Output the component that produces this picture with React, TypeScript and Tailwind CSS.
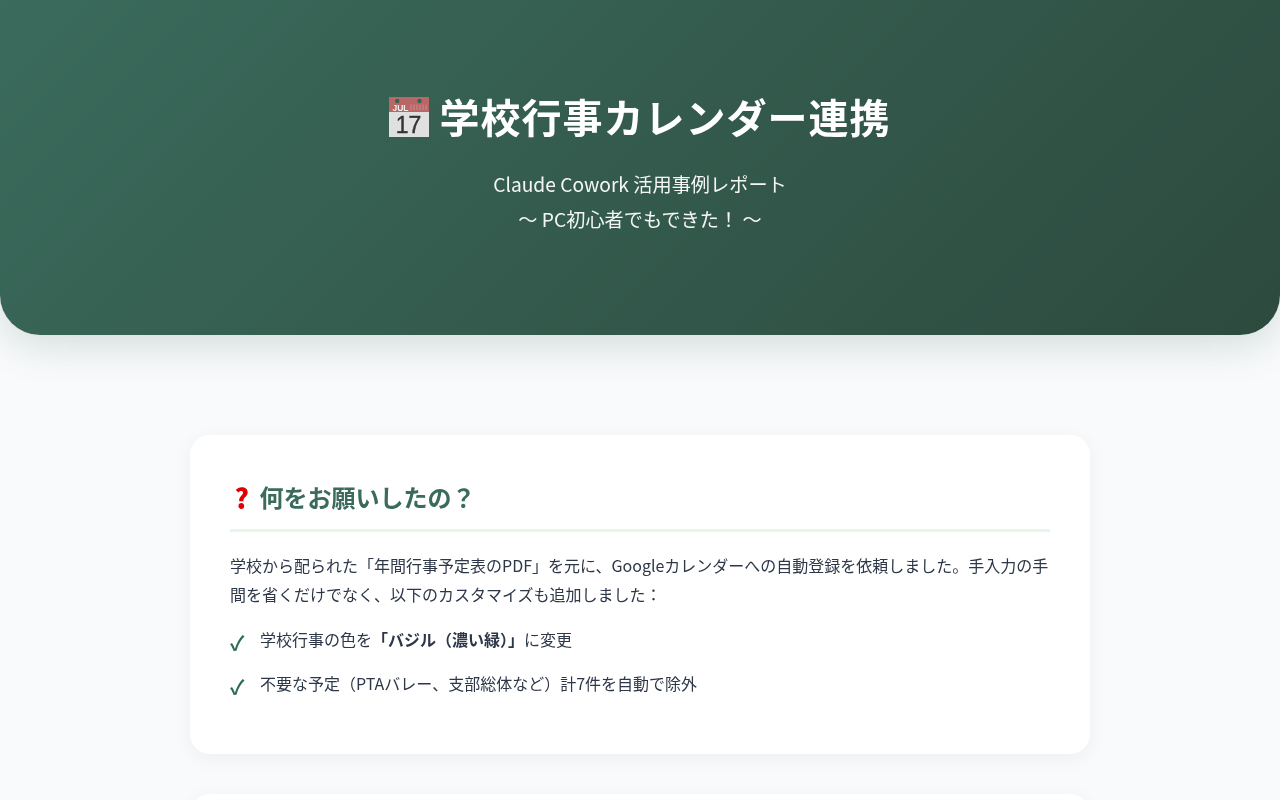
function CalendarEmoji() {
  return (
    <svg viewBox="0 0 42 42" className="inline-block w-[42px] h-[42px] align-[-5px] mr-[10px]">
      <rect x="1" y="1" width="40" height="40" fill="#e0e0e0" />
      <rect x="1" y="1" width="40" height="15" fill="#bb6666" />
      <circle cx="9.2" cy="5" r="2.2" fill="#2f6656" />
      <circle cx="31.5" cy="5" r="2.2" fill="#2f6656" />
      <text x="4.5" y="14.5" fontSize="8.5" letterSpacing="0" fill="#eeeeee" fontFamily="Liberation Sans, sans-serif">JUL</text>
      <path d="M23 8.5v5.5M26 8.5v5.5M29 8.5v5.5M32 8.5v5.5M35 8.5v5.5M38 8.5v5.5" stroke="#cf8a8a" strokeWidth="1" />
      <text x="20.5" y="36.5" textAnchor="middle" fontSize="23" fontWeight="400" letterSpacing="0" fill="#333333" stroke="#333333" strokeWidth="0.4" fontFamily="Liberation Sans, sans-serif">17</text>
    </svg>
  );
}

export default function App() {
  return (
    <div className="min-h-screen bg-[#f9fafb] text-[#2d3748] leading-[1.8] font-['Noto_Sans_CJK_JP','Noto_Sans',sans-serif]">
      <header className="will-change-transform bg-[linear-gradient(135deg,#3a6b5c,#2d4a3e)] rounded-b-[40px] px-10 pt-20 pb-[99px] text-center text-white shadow-[0_10px_40px_rgba(58,107,92,0.2)]">
        <h1 className="text-[40px] font-bold mb-[15px] pr-[2px] leading-[1.8] tracking-[1px]">
          <CalendarEmoji />
          学校行事カレンダー連携
        </h1>
        <p className="text-[19.2px] opacity-95 leading-[1.8]">
          Claude Cowork 活用事例レポート
          <br />
          〜 PC初心者でもできた！ 〜
        </p>
      </header>
      <main className="mx-auto max-w-[900px] pt-[100px]">
        <section className="will-change-transform bg-white rounded-[20px] p-10 mb-10 shadow-[0_4px_20px_rgba(0,0,0,0.05)]">
          <h2 className="text-[24px] font-bold text-[#3a6b5c] pb-[11px] mb-[19px] border-b-[3px] border-[#e8f5e9]">
            <span className="inline-block w-[29.5px] pl-[4.5px] text-[27px] font-black leading-none align-[-2px] text-[#e00000]">?</span>
            何をお願いしたの？
          </h2>
          <p className="text-[16px] mb-2">
            学校から配られた「年間行事予定表のPDF」を元に、Googleカレンダーへの自動登録を依頼しました。手入力の手間を省くだけでなく、以下のカスタマイズも追加しました：
          </p>
          <ul className="text-[16px] mb-2">
            <li className="relative pl-[30px] py-[7.8px]">
              <span className="absolute left-0 top-2 text-[20px] font-bold text-[#2f6b56]">✓</span>
              学校行事の色を<strong>「バジル（濃い緑）」</strong>に変更
            </li>
            <li className="relative pl-[30px] py-[7.8px]">
              <span className="absolute left-0 top-2 text-[20px] font-bold text-[#2f6b56]">✓</span>
              不要な予定（PTAバレー、支部総体など）計7件を自動で除外
            </li>
          </ul>
        </section>
        <section className="will-change-transform bg-white rounded-[20px] p-10 mb-10 h-[300px] shadow-[0_4px_20px_rgba(0,0,0,0.05)]" />
      </main>
    </div>
  );
}
